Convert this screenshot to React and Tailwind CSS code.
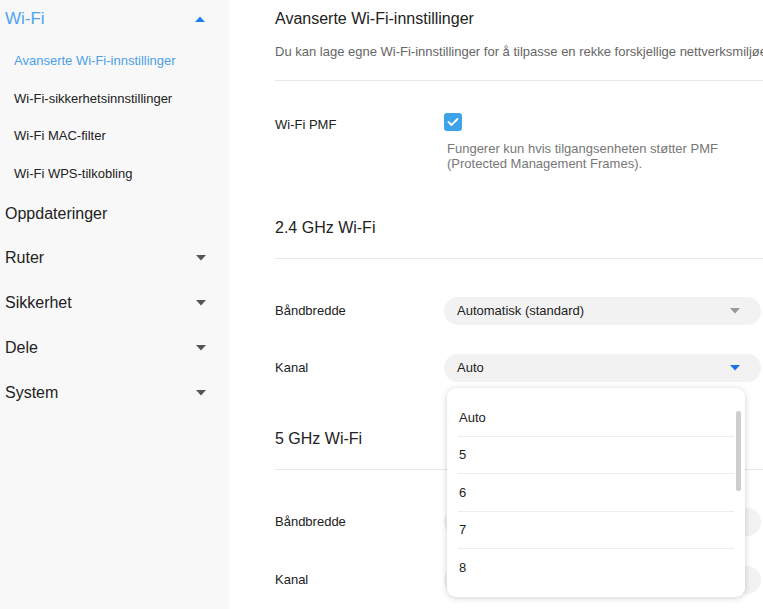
import React from 'react';

const font = { fontFamily: '"Liberation Sans", Arial, sans-serif' };

const Caret = ({ up = false, className = '' }) => (
  <svg width="10" height="6" viewBox="0 0 10 6" className={className}>
    {up ? <path d="M0 6 L5 0.5 L10 6 Z" fill="currentColor" /> : <path d="M0 0 L10 0 L5 5.5 Z" fill="currentColor" />}
  </svg>
);

const subItems = [
  'Avanserte Wi-Fi-innstillinger',
  'Wi-Fi-sikkerhetsinnstillinger',
  'Wi-Fi MAC-filter',
  'Wi-Fi WPS-tilkobling',
];

const groups = ['Ruter', 'Sikkerhet', 'Dele', 'System'];

const channels = ['Auto', '5', '6', '7', '8'];

const Sidebar = () => (
  <aside className="w-[229px] shrink-0 bg-[#f8f8f8]">
    <div className="h-[37px] flex items-center justify-between pl-[5px] pr-[24px]">
      <span className="text-[17px] text-[#4fa3ef]">Wi-Fi</span>
      <Caret up className="text-[#1a7ff0]" />
    </div>
    <ul className="pt-[5px]">
      {subItems.map((item, i) => (
        <li
          key={item}
          className={`h-[37.5px] flex items-center pl-[14px] text-[13px] ${i === 0 ? 'text-[#4ba0e6]' : 'text-[#222]'}`}
        >
          {item}
        </li>
      ))}
    </ul>
    <div className="h-[43px] flex items-center pl-[5px] text-[16px] text-[#222]">Oppdateringer</div>
    {groups.map((g) => (
      <div key={g} className="h-[45px] flex items-center justify-between pl-[5px] pr-[23px] text-[16px] text-[#222]">
        <span>{g}</span>
        <Caret className="text-[#555]" />
      </div>
    ))}
  </aside>
);

const Select = ({ value, active = false, children }) => (
  <div className="relative">
    <div className="w-[317px] h-[28px] rounded-full bg-[#f2f2f2] flex items-center justify-between pl-[13px] pr-[21px] text-[13px] text-[#222]">
      <span>{value}</span>
      <Caret className={active ? 'text-[#1a73e8]' : 'text-[#999]'} />
    </div>
    {children}
  </div>
);

const Row = ({ label, className = '', children }) => (
  <div className={`flex items-center ${className}`}>
    <div className="w-[169px] shrink-0 text-[13px] text-[#222]">{label}</div>
    {children}
  </div>
);

const Dropdown = () => (
  <div className="absolute z-10 left-[3px] top-[34px] w-[298px] h-[209px] bg-white rounded-[9px] shadow-[0_1px_6px_rgba(0,0,0,0.18)] overflow-hidden">
    <div className="pt-[11px] pl-[11px] pr-[11px]">
      {channels.map((c, i) => (
        <div
          key={c}
          className={`h-[37.5px] flex items-center text-[13px] text-[#222] pl-px ${i < channels.length - 1 ? 'border-b border-[#ececec]' : ''}`}
        >
          {c}
        </div>
      ))}
    </div>
    <div className="absolute right-[4px] top-[23px] w-[5px] h-[80px] rounded-full bg-[#cdcdcd]" />
  </div>
);

export default function App() {
  return (
    <div className="flex w-full h-[609px] overflow-hidden bg-white" style={font}>
      <Sidebar />
      <main className="flex-1 min-w-0 pl-[46px] pt-px whitespace-nowrap">
        <div className="h-[36px] flex items-center text-[16px] text-[#222]">Avanserte Wi-Fi-innstillinger</div>
        <div className="h-[30px] flex items-center text-[13px] text-[#666]">
          Du kan lage egne Wi-Fi-innstillinger for å tilpasse en rekke forskjellige nettverksmiljøer.
        </div>
        <div className="mt-[13px] border-t border-[#e8e8e8]" />

        <div className="flex mt-[32px]">
          <div className="w-[169px] shrink-0 pt-[4px] text-[13px] leading-[16px] text-[#222]">Wi-Fi PMF</div>
          <div>
            <div className="w-[18px] h-[18px] rounded-[3px] bg-[#3ca3e8] flex items-center justify-center">
              <svg width="12" height="10" viewBox="0 0 12 10">
                <path d="M1.5 5 L4.5 8 L10.5 2" fill="none" stroke="white" strokeWidth="1.8" strokeLinecap="round" strokeLinejoin="round" />
              </svg>
            </div>
            <div className="mt-[10px] pl-[3px] text-[13px] leading-[15px] text-[#777]">
              <div>Fungerer kun hvis tilgangsenheten støtter PMF</div>
              <div>(Protected Management Frames).</div>
            </div>
          </div>
        </div>

        <div className="mt-[42px] h-[30px] flex items-center text-[16px] text-[#222]">2.4 GHz Wi-Fi</div>
        <div className="mt-[15px] border-t border-[#e8e8e8]" />
        <Row label="Båndbredde" className="mt-[38px]">
          <Select value="Automatisk (standard)" />
        </Row>
        <Row label="Kanal" className="mt-[29px]">
          <Select value="Auto" active>
            <Dropdown />
          </Select>
        </Row>

        <div className="mt-[42px] h-[30px] flex items-center text-[16px] text-[#222]">5 GHz Wi-Fi</div>
        <div className="mt-[15px] border-t border-[#e8e8e8]" />
        <Row label="Båndbredde" className="mt-[38px]">
          <Select value="Automatisk (standard)" />
        </Row>
        <Row label="Kanal" className="mt-[30px]">
          <Select value="Auto" />
        </Row>
      </main>
    </div>
  );
}
